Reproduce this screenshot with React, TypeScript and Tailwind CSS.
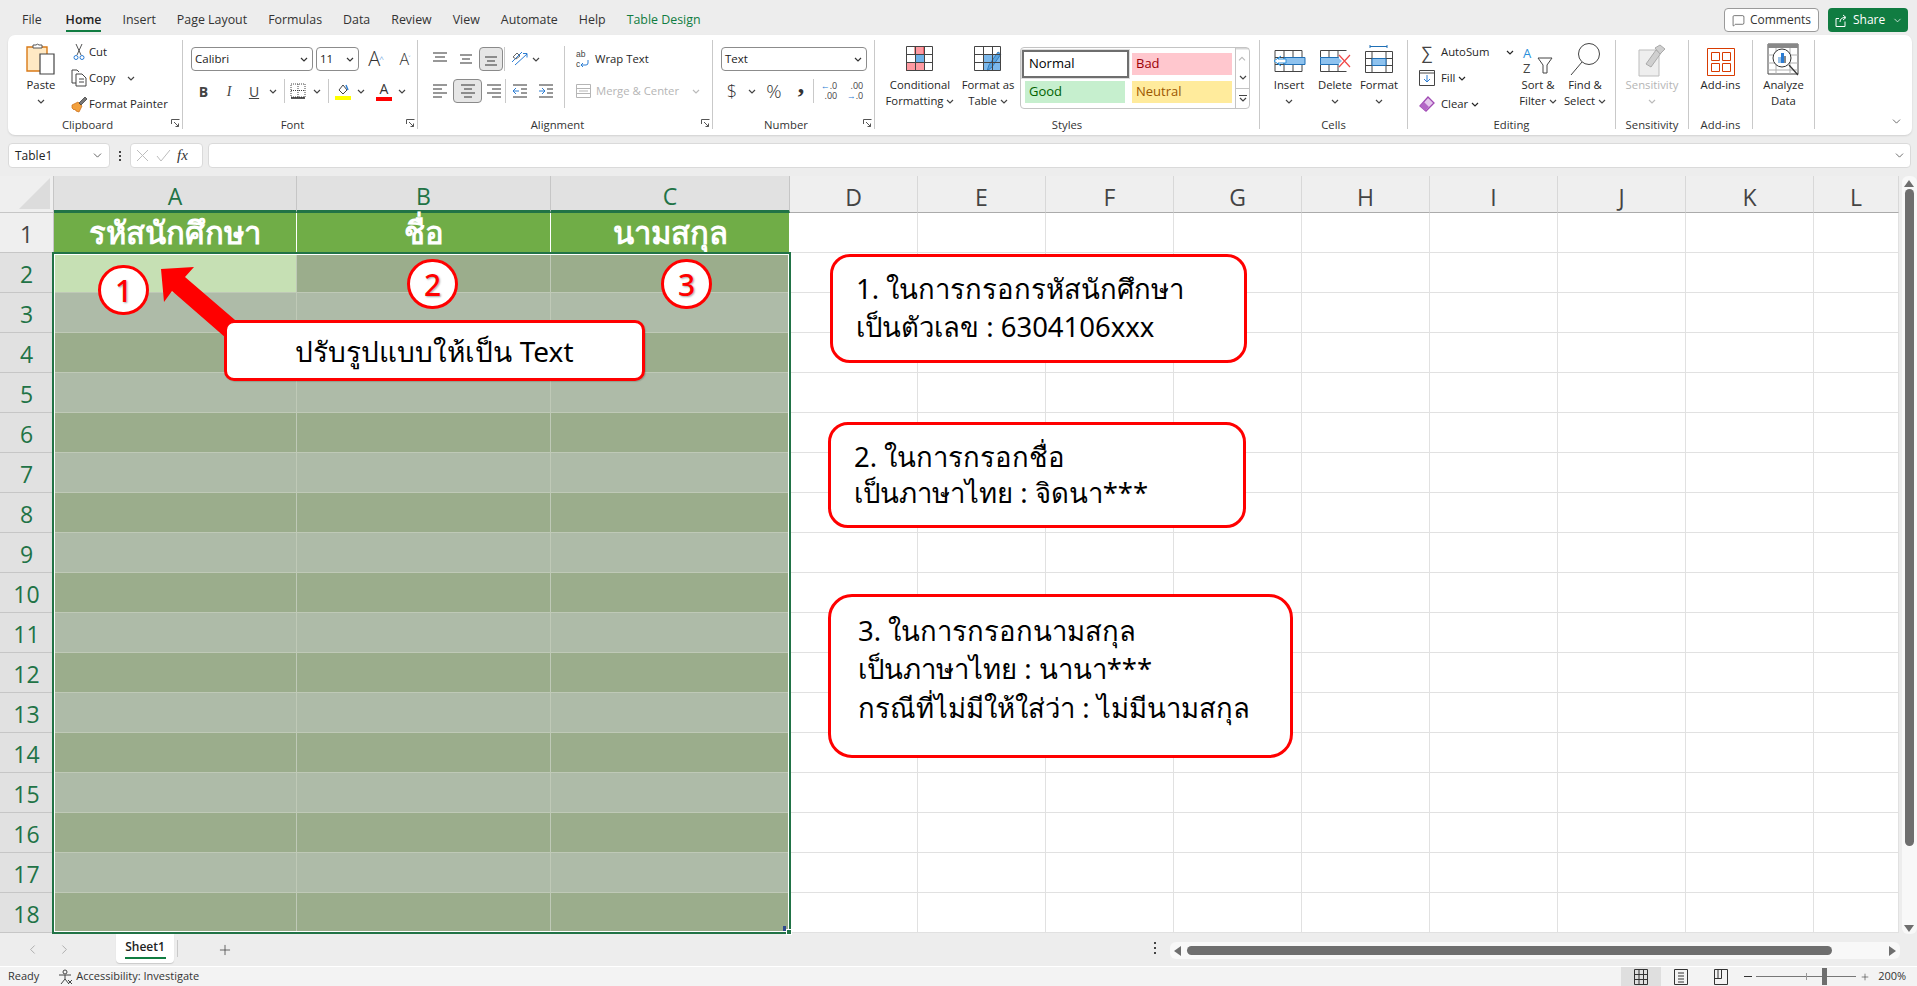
import type { ReactNode } from 'react';
import { ChevronDown, ChevronLeft, ChevronRight, Plus, MessageSquare } from 'lucide-react';

const ROW_NUMBERS = Array.from({ length: 18 }, (_, i) => i + 1);
const COLUMNS = ['A', 'B', 'C', 'D', 'E', 'F', 'G', 'H', 'I', 'J', 'K', 'L'];
const TABS = ['File', 'Home', 'Insert', 'Page Layout', 'Formulas', 'Data', 'Review', 'View', 'Automate', 'Help'];

function Chev({ className = 'text-[#444]' }: { className?: string }) {
    return (
        <svg width="8" height="5" viewBox="0 0 8 5" fill="none" stroke="currentColor" strokeWidth="1.2" className={className}>
            <path d="M1 1l3 3 3-3" />
        </svg>
    );
}

function Launcher() {
    return (
        <svg width="9" height="9" viewBox="0 0 9 9" fill="none" stroke="#555" strokeWidth="1" className="absolute right-[2px] bottom-[1px]">
            <path d="M.5 5V.5H8.5M.5.5M3 3l4.5 4.5M7.5 4.5v3h-3" />
        </svg>
    );
}

function Group({ className, label, launcher, children }: { className: string; label?: string; launcher?: boolean; children: ReactNode }) {
    return (
        <div className={`relative h-[89px] shrink-0 border-r border-[#C9C9C9] ${className}`}>
            {children}
            {label && (
                <div className={`absolute left-0 bottom-[-4px] h-4 text-center text-[11.3px] leading-4 text-[#333] ${launcher ? 'right-[15px]' : 'right-0'}`}>
                    {label}
                </div>
            )}
            {launcher && <Launcher />}
        </div>
    );
}

function Big({ className, icon, lines, chevron, muted }: { className: string; icon: ReactNode; lines: string[]; chevron?: boolean; muted?: boolean }) {
    const color = muted ? 'text-[#B5B5B5]' : 'text-[#262626]';
    return (
        <div className={`flex flex-col items-center shrink-0 ${className}`}>
            <div className="h-[37px] flex items-center justify-center">{icon}</div>
            {lines.map((line, i) => (
                <div key={line} className={`h-4 flex items-center gap-[3px] text-[11.3px] leading-4 whitespace-nowrap ${color}`}>
                    {line}
                    {chevron && i === lines.length - 1 && lines.length > 1 && <Chev />}
                </div>
            ))}
            {chevron && lines.length === 1 && <div className="h-4 flex items-center"><Chev className={muted ? 'text-[#BBB]' : 'text-[#444]'} /></div>}
        </div>
    );
}

function Slot({ className, active, children }: { className: string; active?: boolean; children: ReactNode }) {
    return (
        <div className={`flex items-center justify-center shrink-0 h-6 ${active ? 'bg-[#E6E6E6] border border-[#8A8A8A] rounded-[4px]' : ''} ${className}`}>
            {children}
        </div>
    );
}

function Combo({ className, text }: { className: string; text: string }) {
    return (
        <div className={`h-6 border border-[#8C8C8C] rounded-[4px] bg-white flex items-center justify-between pl-[3px] pr-[4px] text-[11.5px] text-[#222] shrink-0 ${className}`}>
            {text}
            <Chev className="text-[#333]" />
        </div>
    );
}

function Lines({ kind }: { kind: 'top' | 'mid' | 'bot' | 'left' | 'center' | 'right' }) {
    const d = {
        top: 'M1 2h14M3 6h10M1 10h14',
        mid: 'M2 4h12M4 8h8M2 12h12',
        bot: 'M2 6h12M4 10h8M2 14h12',
        left: 'M1 2h14M1 6h9M1 10h14M1 14h9',
        center: 'M1 2h14M4 6h8M1 10h14M4 14h8',
        right: 'M1 2h14M6 6h9M1 10h14M6 14h9',
    }[kind];
    return <svg width="16" height="16" viewBox="0 0 16 16" fill="none" stroke="#333" strokeWidth="1.1"><path d={d} /></svg>;
}

function ClipIcon() {
    return (
        <svg width="30" height="33" viewBox="0 0 30 33" fill="none">
            <path d="M1 5h20v24H1z" fill="#FFE9C4" stroke="#D97A17" strokeWidth="1.4" />
            <path d="M7 6V3h3a2 2 0 0 1 3 0h3v3z" fill="#fff" stroke="#555" />
            <path d="M14 12h14v20H14z" fill="#fff" stroke="#444" strokeWidth="1.2" />
        </svg>
    );
}

function TableIcon({ children }: { children?: ReactNode }) {
    return (
        <svg width="30" height="28" viewBox="0 0 30 28" fill="none">
            {children}
            <path d="M1.5 1.5h26v24h-26zM1.5 9.5h26M1.5 17.5h26M10.5 1.5v24M19.5 1.5v24" stroke="#444" strokeWidth="1" />
        </svg>
    );
}

function Ribbon() {
    return (
        <div className="mx-2 w-[1904px] h-[100px] bg-white rounded-[7px] shadow-[0_1px_2px_rgba(0,0,0,0.12)] flex py-[5px] relative">
            <Group className="w-[175px]" label="Clipboard" launcher>
                <div className="flex">
                    <Big className="w-[56px] ml-[5px]" icon={<ClipIcon />} lines={['Paste']} chevron />
                    <div className="flex flex-col -mt-px ml-[1px] text-[11.3px] text-[#262626]">
                        <div className="h-[26px] flex items-center gap-px">
                            <span className="w-[18px] flex justify-center">
                                <svg width="12" height="18" viewBox="0 0 12 18" fill="none" stroke="#555"><path d="M3 1l5 11M9 1L4 12" /><circle cx="3" cy="14.5" r="2" stroke="#2B7CD3" /><circle cx="9" cy="14.5" r="2" stroke="#2B7CD3" /></svg>
                            </span>
                            Cut
                        </div>
                        <div className="h-[26px] flex items-center gap-px">
                            <span className="w-[18px] flex justify-center">
                                <svg width="16" height="18" viewBox="0 0 16 18" fill="none" stroke="#444"><path d="M5 14H1V1h5l2 2M5 5h6l4 4v8H5zM8 10h5M8 13h5" /></svg>
                            </span>
                            Copy
                            <Chev className="ml-[11px] text-[#444]" />
                        </div>
                        <div className="h-[26px] flex items-center gap-px whitespace-nowrap">
                            <span className="w-[18px] flex justify-center">
                                <svg width="17" height="17" viewBox="0 0 17 17" fill="none"><path d="M1 9l6-3 4 4-3 6-3-1-1-2-1 1-2-2z" fill="#F2A03D" stroke="#C86A12" strokeWidth=".7" /><path d="M8 7l6-6 2 2-6 6z" fill="#777" stroke="#333" strokeWidth=".7" /></svg>
                            </span>
                            Format Painter
                        </div>
                    </div>
                </div>
            </Group>

            <Group className="w-[235px]" label="Font" launcher>
                <div className="pl-2 pt-[7px] flex flex-col gap-2">
                    <div className="flex items-center gap-[3px]">
                        <Combo className="w-[122px]" text="Calibri" />
                        <Combo className="w-[43px]" text="11" />
                        <Slot className="w-[24px] ml-[2px]">
                            <span className="text-[20px] font-light text-[#333] leading-none">A<sup className="text-[8px] text-[#2B7CD3] -ml-px">^</sup></span>
                        </Slot>
                        <Slot className="w-[24px] ml-[2px]">
                            <span className="text-[16px] font-light text-[#333] leading-none">A<sup className="text-[8px] text-[#2B7CD3] -ml-px">˅</sup></span>
                        </Slot>
                    </div>
                    <div className="flex items-center text-[#444] text-[14px]">
                        <Slot className="w-[25px] font-bold">B</Slot>
                        <Slot className="w-[26px] italic font-['Liberation_Serif']">I</Slot>
                        <Slot className="w-[24px] underline">U</Slot>
                        <Slot className="w-[14px]"><Chev /></Slot>
                        <div className="w-px h-[24px] bg-[#C9C9C9] ml-[4px] mr-[3px]" />
                        <Slot className="w-[20px]">
                            <svg width="16" height="16" viewBox="0 0 16 16" fill="none" stroke="#444"><path d="M1 1h14v13H1z" strokeDasharray="1 1" /><path d="M8 1v13M1 7.5h14" strokeDasharray="1 1" /><path d="M1 15h14" strokeWidth="1.4" stroke="#111" /></svg>
                        </Slot>
                        <Slot className="w-[14px] ml-[2px]"><Chev /></Slot>
                        <div className="w-px h-[24px] bg-[#C9C9C9] ml-[4px] mr-[4px]" />
                        <Slot className="w-[20px]">
                            <svg width="16" height="18" viewBox="0 0 16 18" fill="none"><path d="M4 8l4-5 4 5-4 4z" stroke="#444" fill="#fff" /><path d="M11 3l2 5" stroke="#2B7CD3" strokeWidth="1.4" /><rect x="0" y="14" width="16" height="4" fill="#FFFF00" /></svg>
                        </Slot>
                        <Slot className="w-[14px] ml-px"><Chev /></Slot>
                        <Slot className="w-[20px] ml-[6px]">
                            <span className="relative flex flex-col items-center leading-none text-[14px] text-[#333]">A<span className="w-[16px] h-1 bg-[#FF0000] mt-px" /></span>
                        </Slot>
                        <Slot className="w-[14px] ml-px"><Chev /></Slot>
                    </div>
                </div>
            </Group>

            <Group className="w-[295px]" label="Alignment" launcher>
                <div className="flex pt-[7px]">
                    <div className="pl-[9px] flex flex-col gap-2">
                        <div className="flex items-center">
                            <Slot className="w-[26px]"><Lines kind="top" /></Slot>
                            <Slot className="w-[26px]"><Lines kind="mid" /></Slot>
                            <Slot className="w-[24px]" active><Lines kind="bot" /></Slot>
                            <div className="w-px h-6 bg-[#C9C9C9] ml-[1px] mr-[5px]" />
                            <Slot className="w-[18px]">
                                <svg width="17" height="17" viewBox="0 0 17 17" fill="none"><path d="M1 11L11 1M4 14L16 3" stroke="#2B7CD3" /><path d="M12 2.5h4v4" stroke="#2B7CD3" /><path d="M2 6l4-4 3 3-4 3z" stroke="#666" /></svg>
                            </Slot>
                            <Slot className="w-[14px] ml-px"><Chev /></Slot>
                        </div>
                        <div className="flex items-center">
                            <Slot className="w-[26px]"><Lines kind="left" /></Slot>
                            <Slot className="w-[29px]" active><Lines kind="center" /></Slot>
                            <Slot className="w-[23px]"><Lines kind="right" /></Slot>
                            <div className="w-px h-6 bg-[#C9C9C9] mr-[5px]" />
                            <Slot className="w-[18px]">
                                <svg width="16" height="14" viewBox="0 0 16 14" fill="none"><path d="M1 1h14M9 5h6M9 9h6M1 13h14" stroke="#333" /><path d="M7 7H1M4 4L1 7l3 3" stroke="#2B7CD3" /></svg>
                            </Slot>
                            <Slot className="w-[18px] ml-2">
                                <svg width="16" height="14" viewBox="0 0 16 14" fill="none"><path d="M1 1h14M9 5h6M9 9h6M1 13h14" stroke="#333" /><path d="M1 7h6M4 4l3 3-3 3" stroke="#2B7CD3" /></svg>
                            </Slot>
                        </div>
                    </div>
                    <div className="w-px h-[62px] bg-[#C9C9C9] ml-[9px] -mt-px" />
                    <div className="pl-[11px] flex flex-col gap-2 text-[11.3px]">
                        <div className="h-6 flex items-center gap-[2px] text-[#262626]">
                            <span className="w-[17px] flex flex-col font-['Liberation_Sans'] text-[8.5px] leading-[10px] text-[#444]">
                                <span>ab</span>
                                <span className="flex items-center">c<svg width="9" height="8" viewBox="0 0 9 8" fill="none" stroke="#2B7CD3"><path d="M8 0v3a2 2 0 0 1-2 2H1M3 3L1 5l2 2" /></svg></span>
                            </span>
                            Wrap Text
                        </div>
                        <div className="h-6 flex items-center gap-[5px] text-[#B5B5B5] whitespace-nowrap">
                            <svg width="15" height="16" viewBox="0 0 15 16" fill="none" stroke="#B5B5B5"><path d="M.5 1.5h14v13H.5zM.5 5.5h14M.5 10.5h14M3 8h9" /></svg>
                            Merge &amp; Center
                            <Chev className="ml-2 text-[#BBB]" />
                        </div>
                    </div>
                </div>
            </Group>

            <Group className="w-[162px]" label="Number" launcher>
                <div className="pl-2 pt-[7px] flex flex-col gap-2">
                    <Combo className="w-[146px]" text="Text" />
                    <div className="flex items-center text-[#333]">
                        <Slot className="w-[22px] text-[18px] font-light">$</Slot>
                        <Slot className="w-[14px] ml-[2px]"><Chev /></Slot>
                        <Slot className="w-[24px] ml-[3px] text-[19px] font-light">%</Slot>
                        <Slot className="w-[24px] ml-[3px] text-[26px] font-bold font-['Liberation_Serif'] leading-none"><span className="-mt-3">,</span></Slot>
                        <div className="w-px h-6 bg-[#C9C9C9] mr-[3px]" />
                        <Slot className="w-[24px]">
                            <span className="text-[9px] leading-[10px] text-right text-[#444]"><span className="text-[#2B7CD3]">←</span>.0<br />.00</span>
                        </Slot>
                        <Slot className="w-[24px] ml-[2px]">
                            <span className="text-[9px] leading-[10px] text-right text-[#444]">.00<br /><span className="text-[#2B7CD3]">→</span>.0</span>
                        </Slot>
                    </div>
                </div>
            </Group>

            <Group className="w-[385px]" label="Styles">
                <div className="flex">
                    <Big
                        className="w-[64px] ml-[13px]"
                        lines={['Conditional', 'Formatting']}
                        chevron
                        icon={
                            <TableIcon>
                                <path d="M10 1.5h9v8h-9zM1.5 17.5h18v8h-18z" fill="#FF9AA2" />
                                <path d="M10 9.5h9v8h-9z" fill="#6FB2E8" />
                                <path d="M10 1.5h9v8h-9zM1.5 17.5h18v8h-18z" stroke="#E02B2B" />
                            </TableIcon>
                        }
                    />
                    <Big
                        className="w-[60px] ml-[6px]"
                        lines={['Format as', 'Table']}
                        chevron
                        icon={
                            <TableIcon>
                                <path d="M10.5 9.5h17v16h-17z" fill="#7CB9EC" />
                                <path d="M14 26l2-6 9-13 3 2-9 13z" fill="#5BA4DE" stroke="#1F6FB5" strokeWidth=".8" />
                            </TableIcon>
                        }
                    />
                    <div className="ml-[2px] mt-[7px] w-[230px] h-[62px] border border-[#C4C4C4] rounded-[4px] flex">
                        <div className="grid grid-cols-[107px_100px] grid-rows-[28px_28px] gap-x-[3px] pl-[1px] pt-[2px] w-[214px] text-[13px] items-center">
                            <div className="h-[28px] border-2 border-[#6E6E6E] outline outline-1 outline-[#DDD] bg-white flex items-center pl-[5px] text-black">Normal</div>
                            <div className="h-[22px] bg-[#FFC7CE] flex items-center pl-1 text-[#9C0006]">Bad</div>
                            <div className="h-[22px] ml-[3px] w-[100px] bg-[#C6EFCE] flex items-center pl-1 text-[#006100]">Good</div>
                            <div className="h-[22px] bg-[#FFEB9C] flex items-center pl-1 text-[#9C5700]">Neutral</div>
                        </div>
                        <div className="w-[14px] ml-auto flex flex-col border-l border-[#C4C4C4]">
                            <div className="flex-1 flex items-center justify-center border-b border-[#C4C4C4] rotate-180"><Chev className="text-[#BBB]" /></div>
                            <div className="flex-1 flex items-center justify-center border-b border-[#C4C4C4]"><Chev /></div>
                            <div className="flex-1 flex flex-col items-center justify-center gap-px"><span className="w-2 h-px bg-[#444]" /><Chev /></div>
                        </div>
                    </div>
                </div>
            </Group>

            <Group className="w-[148px]" label="Cells">
                <div className="flex pl-[6px]">
                    <Big
                        className="w-[46px]"
                        lines={['Insert']}
                        chevron
                        icon={
                            <svg width="34" height="24" viewBox="0 0 34 24" fill="none" className="mt-1">
                                <path d="M3 1.5h27v21H3zM3 8.5h27M3 15.5h27M12 1.5v21M21 1.5v21" stroke="#444" />
                                <path d="M12 8.5h21v7H12z" fill="#8EC2EE" stroke="#1F6FB5" />
                                <path d="M14 10H6l3-3-7 5 7 5-3-3h8z" fill="#fff" stroke="#2B8FDB" />
                            </svg>
                        }
                    />
                    <Big
                        className="w-[44px] ml-[1px]"
                        lines={['Delete']}
                        chevron
                        icon={
                            <svg width="32" height="24" viewBox="0 0 32 24" fill="none" className="mt-1">
                                <path d="M1.5 1.5h26M1.5 22.5h26M1.5 1.5v7M1.5 15.5v7M10 1.5v21M19 1.5v7M19 15.5v7" stroke="#444" />
                                <path d="M1.5 8.5h18v7h-18z" fill="#8EC2EE" stroke="#1F6FB5" />
                                <path d="M19 8.5l4 3.5-4 3.5z" fill="#8EC2EE" />
                                <path d="M20 6l11 12M31 6L20 18" stroke="#F04848" strokeWidth="1.2" />
                            </svg>
                        }
                    />
                    <Big
                        className="w-[44px]"
                        lines={['Format']}
                        chevron
                        icon={
                            <svg width="30" height="29" viewBox="0 0 30 29" fill="none" className="mt-px">
                                <path d="M6 1.5h17M6 0v3M23 0v3" stroke="#1F6FB5" />
                                <path d="M1.5 6.5h27v21h-27zM1.5 13.5h27M1.5 20.5h27M8 6.5v21M22 6.5v21" stroke="#444" />
                                <path d="M8 13.5h14v7H8z" fill="#8EC2EE" stroke="#1F6FB5" />
                            </svg>
                        }
                    />
                </div>
            </Group>

            <Group className="w-[208px]" label="Editing">
                <div className="flex">
                    <div className="flex flex-col -mt-px ml-[11px] w-[98px] text-[11.3px] text-[#262626] shrink-0">
                        <div className="h-[26px] flex items-center gap-[6px] whitespace-nowrap">
                            <span className="w-[16px] text-center text-[17px] leading-none text-[#444]">∑</span>
                            AutoSum
                            <Chev className="ml-[11px]" />
                        </div>
                        <div className="h-[26px] flex items-center gap-[6px]">
                            <svg width="16" height="16" viewBox="0 0 16 16" fill="none"><path d="M.5.5h15v15H.5z" stroke="#444" /><path d="M8 5v7M5 9l3 3 3-3" stroke="#2B7CD3" /><path d="M.5 3h15" stroke="#444" /></svg>
                            <span>Fill</span>
                            <Chev className="-ml-[3px]" />
                        </div>
                        <div className="h-[26px] flex items-center gap-[6px]">
                            <svg width="16" height="16" viewBox="0 0 16 16" fill="none"><path d="M1 10l8-9 6 6-8 8z" fill="#E4C7EC" stroke="#A04AB3" strokeWidth="1.3" /><path d="M1 10l5 5 4-4-5-5z" fill="#B366C6" /></svg>
                            <span>Clear</span>
                            <Chev className="-ml-[3px]" />
                        </div>
                    </div>
                    <Big
                        className="w-[46px] shrink-0 -ml-[2px]"
                        lines={['Sort &', 'Filter']}
                        chevron
                        icon={
                            <span className="w-[30px] flex items-end mt-1">
                                <span className="flex flex-col text-[13px] leading-[15px]">
                                    <span className="text-[#2B8FDB]">A</span>
                                    <span className="text-[#444]">Z</span>
                                </span>
                                <svg width="16" height="18" viewBox="0 0 16 18" fill="none" stroke="#444" className="ml-auto mb-px"><path d="M1 1h14l-5 7v8H6V8z" /></svg>
                            </span>
                        }
                    />
                    <Big
                        className="w-[46px] shrink-0 ml-px"
                        lines={['Find &', 'Select']}
                        chevron
                        icon={
                            <svg width="32" height="36" viewBox="0 0 32 36" fill="none" stroke="#444"><circle cx="20" cy="13" r="10.5" /><path d="M13 21L2 34" /></svg>
                        }
                    />
                </div>
            </Group>

            <Group className="w-[73px]" label="Sensitivity">
                <Big
                    className="w-full"
                    muted
                    lines={['Sensitivity']}
                    chevron
                    icon={
                        <svg width="28" height="34" viewBox="0 0 28 34" fill="none" className="mt-1"><path d="M1 6h20v26H1z" fill="#EEE" stroke="#BDBDBD" /><path d="M8 20l10-14 5 3-10 14z" fill="#CFCFCF" stroke="#AAA" /><path d="M17 4l5-3 5 4-5 5z" fill="#CFCFCF" stroke="#AAA" /></svg>
                    }
                />
            </Group>

            <Group className="w-[64px]" label="Add-ins">
                <Big
                    className="w-full"
                    lines={['Add-ins']}
                    icon={
                        <svg width="28" height="28" viewBox="0 0 28 28" fill="none" stroke="#D83B01" strokeWidth="1" className="mt-[7px]"><path d="M.5.5h27v27H.5z" /><path d="M4.5 4.5h8v8h-8zM15.5 4.5h8v8h-8zM4.5 15.5h8v8h-8zM15.5 15.5h8v8h-8z" /></svg>
                    }
                />
            </Group>

            <Group className="w-[62px]">
                <Big
                    className="w-full"
                    lines={['Analyze', 'Data']}
                    icon={
                        <svg width="33" height="34" viewBox="0 0 33 34" fill="none" className="mt-[2px]">
                            <path d="M1 1h30v30H1z" fill="#fff" stroke="#444" />
                            <path d="M1 1h30v4H1z" fill="#888" />
                            <path d="M1 12h30M1 20h30M1 27h30M9 5v26M23 5v26" stroke="#B0B0B0" />
                            <circle cx="15" cy="15" r="9" fill="#fff" stroke="#333" />
                            <path d="M11 14h3v6h-3z" fill="#9AC1E6" />
                            <path d="M14 10h3v10h-3z" fill="#2B7CD3" />
                            <path d="M17 13h2v7h-2z" fill="#888" />
                            <path d="M22 22l9 10" stroke="#333" strokeWidth="1.2" />
                        </svg>
                    }
                />
            </Group>
            <ChevronDown className="absolute right-[9px] bottom-[7px] w-[13px] h-[13px] text-[#444]" strokeWidth={1.4} />
        </div>
    );
}

function FormulaBar() {
    return (
        <div className="mt-2 ml-2 h-[25px] flex items-stretch">
            <div className="w-[102px] bg-white border border-[#DADADA] rounded-[4px] flex items-center justify-between pl-[6px] pr-[5px] text-[12px] text-[#222]">
                Table1
                <ChevronDown className="w-[13px] h-[13px] text-[#444]" strokeWidth={1.5} />
            </div>
            <div className="w-[20px] flex flex-col items-center justify-center gap-[2px]">
                <span className="w-[2px] h-[2px] bg-[#444]" /><span className="w-[2px] h-[2px] bg-[#444]" /><span className="w-[2px] h-[2px] bg-[#444]" />
            </div>
            <div className="w-[73px] bg-white border border-[#DADADA] rounded-[4px] flex items-center pl-[5px] gap-[7px]">
                <svg width="13" height="13" viewBox="0 0 13 13" fill="none" stroke="#BDBDBD"><path d="M1 1l11 11M12 1L1 12" /></svg>
                <svg width="15" height="13" viewBox="0 0 15 13" fill="none" stroke="#BDBDBD"><path d="M1 7l4 5L14 1" /></svg>
                <span className="font-['Liberation_Serif'] italic text-[15px] leading-none text-[#333] -ml-[1px]">fx</span>
            </div>
            <div className="ml-[5px] w-[1703px] bg-white border border-[#DADADA] rounded-[4px] flex items-center justify-end pr-[4px]">
                <ChevronDown className="w-[13px] h-[13px] text-[#444]" strokeWidth={1.4} />
            </div>
        </div>
    );
}

function Row({ row }: { row: number }) {
    const stripe = row % 2 === 0 ? 'bg-[#9BAD8C]' : 'bg-[#AEBBA8]';
    const headers = ['รหัสนักศึกษา', 'ชื่อ', 'นามสกุล'];
    return (
        <>
            <div className={`flex items-center justify-center pt-[3px] text-[23px] border-b border-r ${row === 1 ? 'bg-[#EFEFEF] text-[#444] border-[#C6C6C6]' : 'bg-[#E1E1E1] text-[#217346] border-[#C6C6C6]'}`}>
                {row}
            </div>
            {[0, 1, 2].map((col) =>
                row === 1 ? (
                    <div key={col} className="bg-[#70AD47] border-r border-white text-white font-bold text-[31px] flex items-center justify-center leading-none pb-[2px]">
                        {headers[col]}
                    </div>
                ) : (
                    <div key={col} className={`border-b border-r border-[#BFC9B7] ${row === 2 && col === 0 ? 'bg-[#C6E0B4]' : stripe}`} />
                )
            )}
            {COLUMNS.slice(3).map((col) => (
                <div key={col} className="bg-white border-b border-r border-[#E1E1E1]" />
            ))}
        </>
    );
}

function Note({ className, lines }: { className: string; lines: string[] }) {
    return (
        <div className={`absolute bg-white border-[3px] border-[#FF0000] flex flex-col justify-center text-black whitespace-nowrap ${className}`}>
            {lines.map((line) => (
                <div key={line}>{line}</div>
            ))}
        </div>
    );
}

function Badge({ className, n }: { className: string; n: number }) {
    return (
        <div className={`absolute w-[51px] h-[50px] rounded-full bg-white border-[3px] border-[#FF0000] flex items-center justify-center text-[#FF0000] text-[30px] font-medium [text-shadow:1px_1px_2px_rgba(0,0,0,0.35)] ${className}`}>
            {n}
        </div>
    );
}

function Callouts() {
    return (
        <div className="font-['Noto_Sans','sans-serif']">
            <svg width="100" height="90" viewBox="0 0 100 90" className="absolute left-[150px] top-[84px]">
                <path d="M11 9L44 7L35 17L92 66L76 78L22 31L14 42Z" fill="#FF0000" />
            </svg>
            <Badge className="left-[98px] top-[89px]" n={1} />
            <Badge className="left-[407px] top-[83px]" n={2} />
            <Badge className="left-[661px] top-[83px]" n={3} />
            <Note className="left-[224px] top-[144px] w-[421px] h-[61px] rounded-[10px] items-center text-[28px] leading-[38px] shadow-[1px_1px_1px_rgba(0,0,0,0.15)]" lines={['ปรับรูปแบบให้เป็น Text']} />
            <Note className="left-[830px] top-[78px] w-[417px] h-[109px] rounded-[20px] pl-[23px] text-[27.5px] leading-[38px] pb-[2px]" lines={['1. ในการกรอกรหัสนักศึกษา', 'เป็นตัวเลข : 6304106xxx']} />
            <Note className="left-[828px] top-[246px] w-[418px] h-[106px] rounded-[20px] pl-[23px] text-[27.5px] leading-[36px]" lines={['2. ในการกรอกชื่อ', 'เป็นภาษาไทย : จิดนา***']} />
            <Note className="left-[828px] top-[418px] w-[465px] h-[164px] rounded-[24px] pl-[27px] text-[27.5px] leading-[38.5px] pb-[13px]" lines={['3. ในการกรอกนามสกุล', 'เป็นภาษาไทย : นานา***', 'กรณีที่ไม่มีให้ใส่ว่า : ไม่มีนามสกุล']} />
        </div>
    );
}

function Sheet() {
    return (
        <div className="relative mt-2 h-[758px] flex">
            <div className="w-[1899px] grid grid-cols-[54px_243px_254px_239px_128px_128px_128px_128px_128px_128px_128px_128px_85px] grid-rows-[37px_repeat(18,40px)] font-['Open_Sans','sans-serif']">
                <div className="bg-[#EFEFEF] border-b border-r border-[#C6C6C6] relative">
                    <svg width="31" height="31" viewBox="0 0 31 31" className="absolute right-[3px] bottom-[3px]"><path d="M31 0v31H0z" fill="#DCDCDC" /></svg>
                </div>
                {COLUMNS.map((col, i) => (
                    <div
                        key={col}
                        className={`flex items-center justify-center pt-[6px] text-[23px] ${i < 3 ? 'bg-[#E1E1E1] text-[#217346] border-b-[3px] border-b-[#217346] border-r border-r-[#C6C6C6]' : 'bg-[#EFEFEF] text-[#444] border-b border-b-[#ABABAB] border-r border-r-[#D8D8D8]'}`}
                    >
                        {col}
                    </div>
                ))}
                {ROW_NUMBERS.map((row) => (
                    <Row key={row} row={row} />
                ))}
            </div>
            <div className="flex-1 bg-[#EDEDED] pl-[3px] relative">
                <div className="h-full bg-[#F8F8F8] rounded-[6px] flex flex-col items-center pr-[1px]">
                    <span className="mt-[4px] w-0 h-0 border-x-[5px] border-x-transparent border-b-[7px] border-b-[#6E6E6E]" />
                    <div className="mt-[2px] w-[9px] h-[657px] bg-[#6E6E6E] rounded-full" />
                    <span className="mt-auto mb-[2px] w-0 h-0 border-x-[5px] border-x-transparent border-t-[7px] border-t-[#6E6E6E]" />
                </div>
            </div>

            {/* selection frame */}
            <div className="absolute left-[52px] top-[76px] w-[739px] h-[682px] border-2 border-[#217346] pointer-events-none">
                <div className="w-full h-full border border-white" />
                <span className="absolute right-[-3px] bottom-[-3px] w-[6px] h-[6px] bg-[#217346] border border-white" />
                <span className="absolute right-[3px] bottom-[1px] w-[3px] h-[5px] bg-[#2F4A8F]" />
            </div>

            <Callouts />
        </div>
    );
}

function SheetTabs() {
    return (
        <div className="h-[32px] flex items-start relative">
            <ChevronLeft className="absolute left-[25px] top-[8px] w-[15px] h-[15px] text-[#9A9A9A]" strokeWidth={1.2} />
            <ChevronRight className="absolute left-[57px] top-[8px] w-[15px] h-[15px] text-[#9A9A9A]" strokeWidth={1.2} />
            <div className="ml-[116px] w-[58px] h-[29px] bg-white rounded-b-[4px] shadow-[0_1px_1px_rgba(0,0,0,0.15)] flex flex-col items-center text-[12px] font-semibold text-[#222] pt-[4px]">
                Sheet1
                <span className="w-[41px] h-[2px] bg-[#107C41] mt-px" />
            </div>
            <span className="ml-[3px] mt-[6px] w-px h-[17px] bg-[#C9C9C9]" />
            <Plus className="ml-[39px] mt-[8px] w-[16px] h-[16px] text-[#444]" strokeWidth={1.2} />
            <div className="ml-[914px] mt-[8px] w-[15px] flex flex-col items-center gap-[3px]">
                <span className="w-[2px] h-[2px] bg-[#444]" /><span className="w-[2px] h-[2px] bg-[#444]" /><span className="w-[2px] h-[2px] bg-[#444]" />
            </div>
            <div className="ml-[8px] mt-[8px] w-[730px] h-[17px] bg-[#F8F8F8] rounded-[6px] flex items-center px-[4px]">
                <span className="w-0 h-0 border-y-[5px] border-y-transparent border-r-[7px] border-r-[#6E6E6E]" />
                <div className="ml-[6px] w-[645px] h-[9px] bg-[#6E6E6E] rounded-full" />
                <span className="ml-auto w-0 h-0 border-y-[5px] border-y-transparent border-l-[7px] border-l-[#6E6E6E]" />
            </div>
        </div>
    );
}

function StatusBar() {
    return (
        <div className="h-[20px] bg-[#F3F3F3] border-t border-white flex items-center text-[11px] text-[#333]">
            <span className="ml-2">Ready</span>
            <svg width="16" height="16" viewBox="0 0 16 16" fill="none" stroke="#444" className="ml-[18px]"><circle cx="8" cy="3" r="2" /><path d="M2 6h12M8 6v4M8 10l-4 5M8 10l4 5M11 11l4 4M15 11l-4 4" /></svg>
            <span className="ml-[3px]">Accessibility: Investigate</span>
            <div className="ml-[1422px] w-[40px] h-full bg-[#DFDFDF] flex items-center justify-center">
                <svg width="14" height="16" viewBox="0 0 14 16" fill="none" stroke="#333"><path d="M.5.5h13v15H.5zM.5 5.5h13M.5 10.5h13M5 .5v15M9.5.5v15" /></svg>
            </div>
            <svg width="14" height="16" viewBox="0 0 14 16" fill="none" stroke="#333" className="ml-[13px]"><path d="M.5.5h13v15H.5zM4 4h6M4 7h6M4 10h6M4 13h6" /></svg>
            <svg width="14" height="16" viewBox="0 0 14 16" fill="none" stroke="#333" className="ml-[26px]"><path d="M.5.5h13v15H.5zM.5 9.5h7V.5M4 .5v9" /></svg>
            <span className="ml-[16px] w-[8px] h-px bg-[#333]" />
            <div className="relative ml-[4px] w-[100px] h-px bg-[#777]">
                <span className="absolute left-[50px] top-[-3px] w-px h-[7px] bg-[#999]" />
                <span className="absolute left-[66px] top-[-8px] w-[5px] h-[17px] bg-[#6E6E6E]" />
            </div>
            <Plus className="ml-[4px] w-[10px] h-[10px] text-[#333]" strokeWidth={1.4} />
            <span className="ml-[8px]">200%</span>
        </div>
    );
}

export default function App() {
    return (
        <div className="w-[1917px] h-[986px] overflow-hidden bg-[#EDEDED] font-['Open_Sans','Noto_Sans','sans-serif'] text-[12px]">
            <div className="h-[35px] pt-[5px] flex items-center relative">
                <div className="ml-[22px] flex items-center gap-[21px] text-[#333] text-[12.4px]">
                    {TABS.map((tab) => (
                        <div key={tab} className={`relative ${tab === 'File' ? 'mr-[3px]' : ''} ${tab === 'Home' ? 'font-semibold text-[#222]' : ''}`}>
                            {tab}
                            {tab === 'Home' && <span className="absolute left-0 right-0 bottom-[-3px] h-[2px] bg-[#107C41]" />}
                        </div>
                    ))}
                    <div className="text-[#107C41]">Table Design</div>
                </div>
                <div className="ml-auto mr-[9px] flex items-center gap-[9px]">
                    <div className="h-6 w-[95px] bg-white border border-[#9A9A9A] rounded-[4px] flex items-center justify-center gap-[5px] text-[#333]">
                        <MessageSquare className="w-[13px] h-[13px]" strokeWidth={1.2} />
                        Comments
                    </div>
                    <div className="h-6 w-[80px] bg-[#107C41] rounded-[4px] flex items-center text-white pl-[7px] gap-[5px]">
                        <svg width="13" height="13" viewBox="0 0 13 13" fill="none" stroke="currentColor"><path d="M10 7.5v5H1v-8h3M5 8c0-3 2-4.500 5-4.500M8 1l3 2.500L8 6" /></svg>
                        Share
                        <ChevronDown className="ml-auto mr-[5px] w-[11px] h-[11px]" strokeWidth={1.6} />
                    </div>
                </div>
            </div>
            <Ribbon />
            <FormulaBar />
            <Sheet />
            <SheetTabs />
            <StatusBar />
        </div>
    );
}
